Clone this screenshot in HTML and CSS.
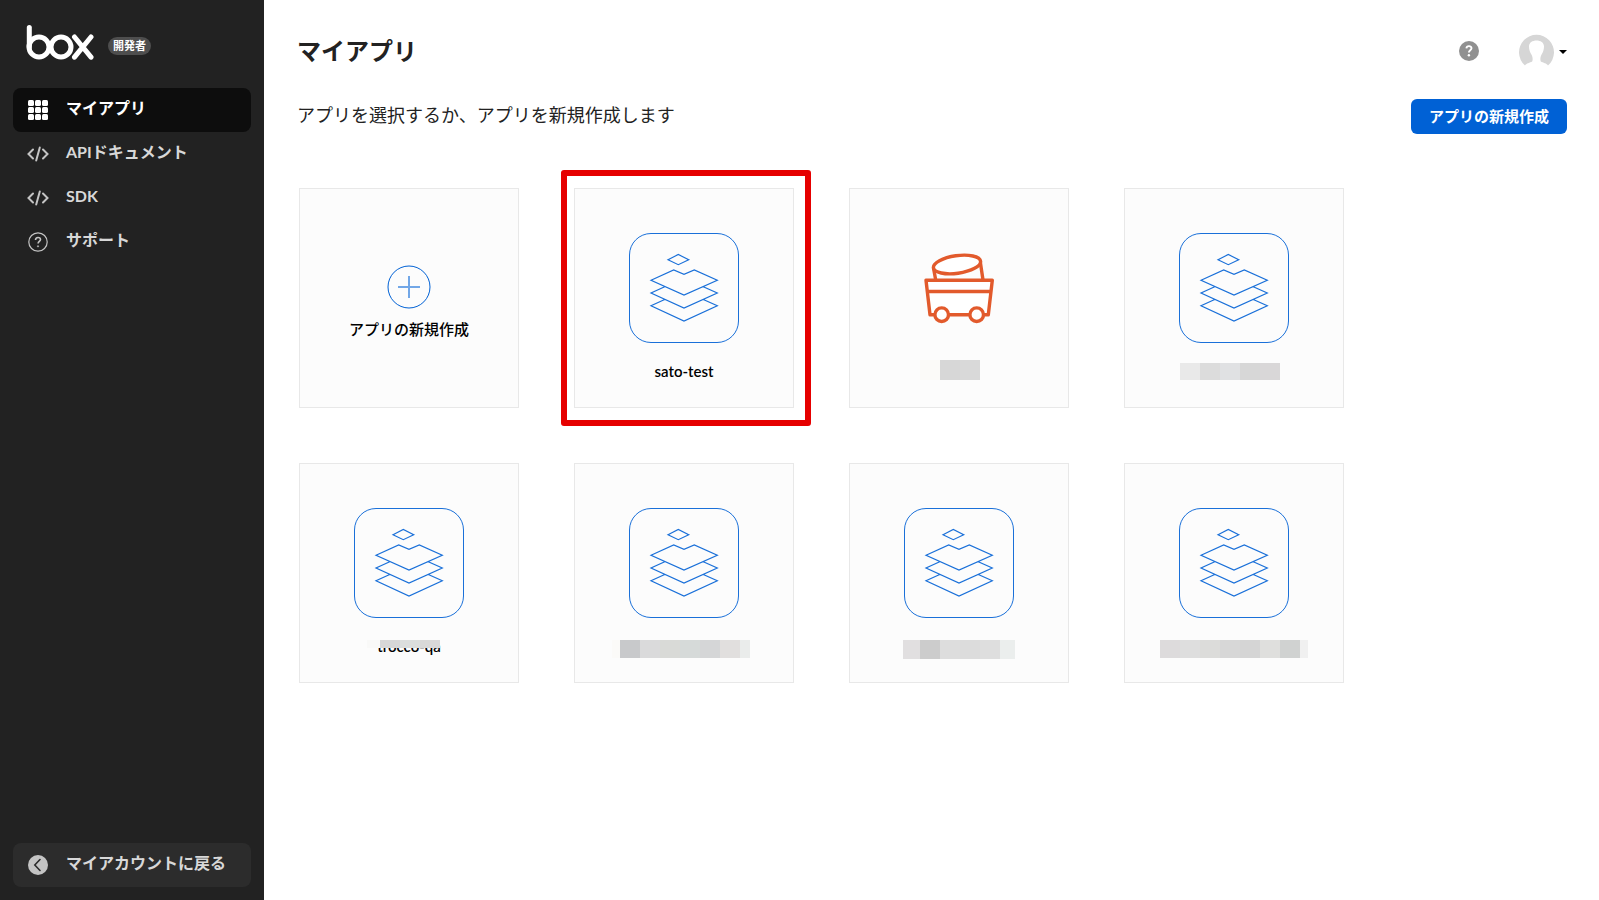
FILE: index.html
```
<!DOCTYPE html>
<html lang="ja">
<head>
<meta charset="utf-8">
<title>マイアプリ</title>
<link rel="stylesheet" href="styles.css">
</head>
<body>
<svg class="defs" aria-hidden="true">
  <symbol id="layers" viewBox="0 0 110 110">
    <rect x=".5" y=".5" width="109" height="109" rx="21.500" stroke-width="1"/>
    <path d="M39 26.7 49.3 21.5 59.7 26.7 49.3 31.7ZM22 47.3 44.7 37 55 41.3 65.3 37 88.3 47.3 55 62ZM35.7 53.7 22 60 55 75 88.3 60 74.3 53.7M35.7 66.5 22 72.8 55 88 88.3 72.8 74.3 66.5"/>
  </symbol>
  <symbol id="code" viewBox="0 0 22 16">
    <path d="M6 3.500 1.500 8 6 12.500M16 3.500 20.500 8 16 12.500M12.800 1.500 9.200 14.500"/>
  </symbol>
</svg>
<div class="layout">
  <aside class="sidebar">
    <div class="brand">
      <svg class="logo" viewBox="0 0 68 36" role="img" aria-label="box">
        <path d="M3.300 3.500V23"/>
        <circle cx="13" cy="23" r="10"/>
        <circle cx="35" cy="23" r="10"/>
        <path d="M48.500 13 65 33.200M65 13 48.500 33.200"/>
      </svg>
      <span class="badge">開発者</span>
    </div>
    <nav class="nav">
      <a class="nav-item active" href="#">
        <svg class="nav-icon" viewBox="0 0 20 20" fill="currentColor"><rect width="6" height="6" rx="1.500"/><rect x="7" width="6" height="6" rx="1.500"/><rect x="14" width="6" height="6" rx="1.500"/><rect y="7" width="6" height="6" rx="1.500"/><rect x="7" y="7" width="6" height="6" rx="1.500"/><rect x="14" y="7" width="6" height="6" rx="1.500"/><rect y="14" width="6" height="6" rx="1.500"/><rect x="7" y="14" width="6" height="6" rx="1.500"/><rect x="14" y="14" width="6" height="6" rx="1.500"/></svg>
        <span>マイアプリ</span>
      </a>
      <a class="nav-item" href="#"><svg class="nav-icon code"><use href="#code"/></svg><span>APIドキュメント</span></a>
      <a class="nav-item" href="#"><svg class="nav-icon code"><use href="#code"/></svg><span>SDK</span></a>
      <a class="nav-item" href="#">
        <svg class="nav-icon" viewBox="0 0 20 20" fill="none" stroke="currentColor"><circle cx="10" cy="10" r="9.200" stroke-width="1.200"/><path d="M7.500 8c0-3.300 5-3.300 5-.4 0 1.800-2.400 1.900-2.400 3.900" stroke-width="1.600"/><circle cx="10" cy="14.300" r=".6"/></svg>
        <span>サポート</span>
      </a>
    </nav>
    <a class="nav-item back" href="#">
      <svg class="nav-icon" viewBox="0 0 20 20" fill="none"><circle cx="10" cy="10" r="10" fill="#c4c4c4"/><path d="M12 4.500 6.800 10 12 15.500" stroke="#2c2c2c" stroke-width="1.600" stroke-linecap="round"/></svg>
      <span>マイアカウントに戻る</span>
    </a>
  </aside>
  <main class="main">
    <header class="topbar">
      <h1>マイアプリ</h1>
      <button class="icon-button" type="button" aria-label="ヘルプ">
        <svg width="20" height="20" viewBox="0 0 20 20" fill="none"><circle cx="10" cy="10" r="10" fill="#909090"/><path d="M7.400 7.300c.3-3 5.200-2.800 5.100 0 0 1.900-2.600 2-2.600 4.200" stroke="#fff" stroke-width="1.900"/><circle cx="9.900" cy="14.300" r="1.200" fill="#fff"/></svg>
      </button>
      <button class="icon-button account" type="button" aria-label="アカウント">
        <svg width="35" height="36" viewBox="0 -1 35 36"><path fill="#d6d6d6" d="M6 30.500A17.500 17.500 0 1 1 29 30.500C28 28.500 24 27.500 21.800 26.500C21 24.500 21.300 22 22.300 20C24 17.500 25 14.500 25 11.500C25 7.500 21.500 5.500 17.500 5.500S10 7.500 10 11.500C10 14.500 11 17.500 12.700 20C13.700 22 14 24.500 13.200 26.500C11 27.500 7 28.500 6 30.500Z"/></svg>
        <svg class="caret" width="8" height="4" viewBox="0 0 8 4"><path d="M0 0h8L4 4Z"/></svg>
      </button>
    </header>
    <div class="intro">
      <p>アプリを選択するか、アプリを新規作成します</p>
      <button class="primary" type="button">アプリの新規作成</button>
    </div>
    <section class="apps">
      <a class="card create" href="#">
        <svg width="44" height="44" viewBox="0 0 44 44" fill="none" stroke="#0061d5"><circle cx="22" cy="22" r="21"/><path d="M11 22h22M22 11v22" stroke-width="2" stroke-opacity=".55"/></svg>
        <span>アプリの新規作成</span>
      </a>
      <a class="card highlighted" href="#">
        <svg class="app-icon"><use href="#layers"/></svg>
        <span class="label">sato-test</span>
      </a>
      <a class="card" href="#">
        <svg class="cart-icon" viewBox="0 0 110 110"><path d="M29.500 35 31.700 47M76 27 79 47"/><ellipse cx="53" cy="31.500" rx="23.800" ry="8.800" transform="rotate(-8 53 31.500)"/><path d="M22 47.300H88.300L84.300 81.700H26ZM24 58.500H86.500"/><circle cx="37.700" cy="81.700" r="6.800"/><circle cx="72.700" cy="81.700" r="6.800"/></svg>
        <svg class="mosaic" width="78" height="26"><rect width="20" height="20" fill="#fbfaf8"/><rect x="20" width="20" height="20" fill="#d7d7d7"/><rect x="40" width="20" height="20" fill="#d9d9d9"/></svg>
      </a>
      <a class="card" href="#">
        <svg class="app-icon"><use href="#layers"/></svg>
        <svg class="mosaic" width="108" height="26"><rect y="3" width="20" height="17" fill="#e9e9e9"/><rect x="20" y="3" width="20" height="17" fill="#dcdcdc"/><rect x="40" y="3" width="20" height="17" fill="#e0e1e3"/><rect x="60" y="3" width="20" height="17" fill="#d7d7d7"/><rect x="80" y="3" width="20" height="17" fill="#d9d7d8"/></svg>
      </a>
      <a class="card" href="#">
        <svg class="app-icon"><use href="#layers"/></svg>
        <span class="label masked">trocco-qa
          <svg class="mask" width="73" height="13"><rect width="73" height="13" fill="#fcfcfc"/><rect y="5" width="13" height="8" fill="#f9f9f8"/><rect x="13" y="5" width="20" height="8" fill="#d7d7d7"/><rect x="33" y="5" width="20" height="8" fill="#dcdedd"/><rect x="53" y="5" width="20" height="8" fill="#d9d9d8"/></svg>
        </span>
      </a>
      <a class="card" href="#">
        <svg class="app-icon"><use href="#layers"/></svg>
        <svg class="mosaic" width="144" height="26"><rect y="5" width="8" height="18" fill="#fbfaf8"/><rect x="8" y="5" width="20" height="18" fill="#c8c9cb"/><rect x="28" y="5" width="20" height="18" fill="#dadadb"/><rect x="48" y="5" width="20" height="18" fill="#d9dad7"/><rect x="68" y="5" width="20" height="18" fill="#d6dad9"/><rect x="88" y="5" width="20" height="18" fill="#d5d6d7"/><rect x="108" y="5" width="20" height="18" fill="#e1dfde"/><rect x="128" y="5" width="10" height="18" fill="#eaeceb"/></svg>
      </a>
      <a class="card" href="#">
        <svg class="app-icon"><use href="#layers"/></svg>
        <svg class="mosaic" width="112" height="26"><rect y="5" width="17" height="19" fill="#e1dfe0"/><rect x="17" y="5" width="20" height="19" fill="#cccccc"/><rect x="37" y="5" width="20" height="19" fill="#dddddd"/><rect x="57" y="5" width="20" height="19" fill="#dcdcdc"/><rect x="77" y="5" width="20" height="19" fill="#dedede"/><rect x="97" y="5" width="15" height="19" fill="#ebeeed"/></svg>
      </a>
      <a class="card" href="#">
        <svg class="app-icon"><use href="#layers"/></svg>
        <svg class="mosaic" width="148" height="26"><rect y="5" width="20" height="18" fill="#dddbdc"/><rect x="20" y="5" width="20" height="18" fill="#dedede"/><rect x="40" y="5" width="20" height="18" fill="#dcdcda"/><rect x="60" y="5" width="20" height="18" fill="#d7d7d7"/><rect x="80" y="5" width="20" height="18" fill="#d5d5d5"/><rect x="100" y="5" width="20" height="18" fill="#dfdfdd"/><rect x="120" y="5" width="20" height="18" fill="#d0d2d1"/><rect x="140" y="5" width="8" height="18" fill="#f0f0f0"/></svg>
      </a>
    </section>
  </main>
</div>
</body>
</html>
```
FILE: styles.css
```
* { box-sizing: border-box; }
body {
  margin: 0;
  color: #222;
  background: #fff;
  font-family: Lato, "Noto Sans CJK JP", sans-serif;
}
a { color: inherit; text-decoration: none; }
button { font: inherit; border: 0; cursor: pointer; }
svg { display: block; flex: none; }
.defs { position: absolute; width: 0; height: 0; }
.layout { display: flex; min-height: 100vh; }

.sidebar {
  flex: none;
  display: flex;
  flex-direction: column;
  width: 264px;
  padding: 24px 13px 13px;
  background: #222;
}
.brand {
  display: flex;
  align-items: center;
  gap: 14px;
  height: 36px;
  margin: 0 13px 28px;
}
.logo {
  width: 68px;
  height: 36px;
  fill: none;
  stroke: #fff;
  stroke-width: 5;
  stroke-linecap: round;
}
.badge {
  margin-top: 8px;
  padding: 0 5px;
  border-radius: 10px;
  background: #4e4e4e;
  color: #fff;
  font-size: 11px;
  font-weight: 700;
  line-height: 18px;
}
.nav { flex: 1; }
.nav-item {
  display: flex;
  align-items: center;
  gap: 18px;
  height: 44px;
  padding: 0 15px;
  border-radius: 8px;
  color: #d8d8d8;
  font-size: 16px;
  font-weight: 700;
  line-height: 24px;
}
.nav-item span { padding-bottom: 4px; }
.nav-icon { width: 20px; height: 20px; color: #c4c4c4; overflow: visible; }
.nav-icon.code {
  width: 22px;
  height: 16px;
  margin: 0 -1px;
  fill: none;
  stroke: #c4c4c4;
  stroke-width: 2;
  stroke-linecap: round;
}
.active { background: #0d0d0d; color: #fff; }
.active .nav-icon { color: #fff; }
.back { background: #2c2c2c; }

.main { flex: 1; min-width: 0; padding: 33px 32px 34px 33px; }
.topbar { display: flex; align-items: center; height: 36px; }
h1 {
  flex: 1;
  margin: 0;
  font-size: 24px;
  font-weight: 700;
  line-height: 32px;
}
.icon-button { display: flex; align-items: center; padding: 0; background: none; }
.account { gap: 5px; margin-left: 40px; padding-top: 2px; }
.intro {
  display: flex;
  align-items: flex-start;
  justify-content: space-between;
  margin: 30px 0 54px;
}
.intro p { margin: 0; padding-top: 2px; font-size: 18px; font-weight: 400; line-height: 28px; }
.primary {
  height: 35px;
  padding: 0 18px 3px;
  border-radius: 6px;
  background: #0061d5;
  color: #fff;
  font-size: 15px;
  font-weight: 700;
}
.apps {
  display: grid;
  grid-template-columns: repeat(auto-fill, 220px);
  gap: 55px;
  padding-left: 2px;
}
.card {
  position: relative;
  display: flex;
  flex-direction: column;
  align-items: center;
  height: 220px;
  padding-top: 44px;
  border: 1px solid #e8e8e8;
  background: #fcfcfc;
  color: #000;
  font-size: 15px;
  font-weight: 600;
  line-height: 22px;
}
.create { gap: 9px; padding-top: 76px; font-weight: 500; }
.highlighted::after {
  content: "";
  position: absolute;
  inset: -19px -18px -19px -14px;
  border: 6px solid #e60000;
  border-radius: 3px;
}
.app-icon, .cart-icon { width: 110px; height: 110px; fill: none; }
.app-icon { stroke: #1a70d9; stroke-width: 1.2; }
.cart-icon { fill: #fff; stroke: #e25a2c; stroke-width: 3.4; stroke-linejoin: round; }
.label, .mosaic { margin-top: 17px; }
.masked { position: relative; }
.mask { position: absolute; left: -10px; top: 0; }
```
